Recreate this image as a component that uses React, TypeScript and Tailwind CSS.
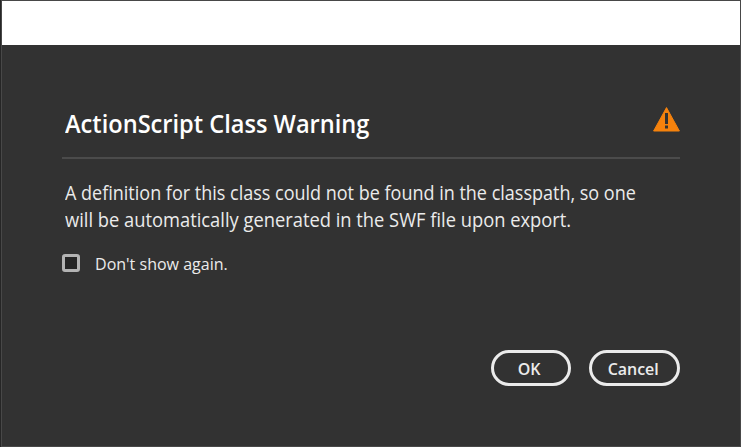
const font = "font-['Open_Sans','Noto_Sans',sans-serif]";

export default function App() {
  return (
    <div className={`flex h-[447px] w-[741px] border-l border-[#262626] bg-[#323232] text-[#ebebeb] ${font}`}>
      <div className="flex min-w-0 flex-1 flex-col border border-[#484848]">
        <div className="h-11 shrink-0 bg-white" />
        <main role="dialog" className="flex min-w-0 flex-1 flex-col pt-[60px] pr-[60px] pl-[60px]">
          <header className="flex h-[54px] shrink-0 items-start justify-between border-b-2 border-[#4b4b4b]">
            <h1 className="ml-[3px] origin-left scale-x-[0.944] whitespace-nowrap text-[25px] leading-[37px] font-semibold text-white">
              ActionScript Class Warning
            </h1>
            <svg className="mt-[2px] h-[26px] w-7 shrink-0" viewBox="0 0 28 26">
              <path d="M14.5 0.6 27.4 24H1.6Z" fill="#f5820d" stroke="#f5820d" strokeWidth="1" strokeLinejoin="round" />
              <path d="M13 6h3v11h-3zM13 18.5h3v3h-3z" fill="#323232" />
            </svg>
          </header>
          <p className="mt-5 ml-[3px] whitespace-nowrap text-[20px] leading-[27px]">
            <span className="block origin-left scale-x-[0.9]">A definition for this class could not be found in the classpath, so one</span>
            <span className="block origin-left scale-x-[0.916]">will be automatically generated in the SWF file upon export.</span>
          </p>
          <label className="mt-[18px] flex h-6 items-center">
            <span className="h-[18px] w-[18px] shrink-0 rounded-[3px] border-3 border-[#b3b3b3] bg-[#252525]" />
            <span className="mt-px ml-[15px] origin-left scale-x-[0.943] whitespace-nowrap text-[17px] leading-6">Don't show again.</span>
          </label>
          <div className="mt-[75px] flex justify-end gap-[18px] text-[17px] leading-6 font-semibold">
            <button className="h-9 w-20 rounded-full border-3 border-[#ebebeb] pt-px">
              <span className="inline-block scale-x-[0.94] -translate-x-[2px]">OK</span>
            </button>
            <button className="h-9 w-[91px] rounded-full border-3 border-[#ebebeb] pt-px">
              <span className="inline-block scale-x-[0.94] -translate-x-px">Cancel</span>
            </button>
          </div>
        </main>
      </div>
    </div>
  );
}
